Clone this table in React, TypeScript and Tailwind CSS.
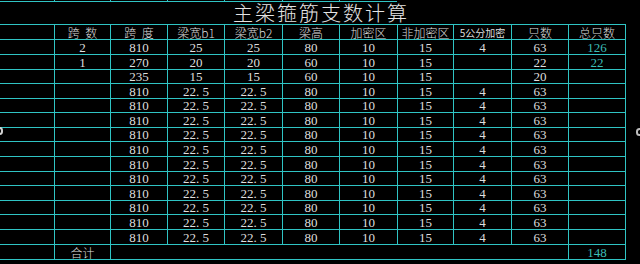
const cjk = { fontFamily: '"Noto Sans CJK SC", "Noto Sans", sans-serif' };
const num = { fontFamily: '"Liberation Serif", "Noto Sans CJK SC", serif' };

type Cell = { text?: string; cyan?: boolean; small?: boolean; cjk?: boolean };

const header: Cell[] = [
  {},
  { text: "跨  数", cjk: true },
  { text: "跨  度", cjk: true },
  { text: "梁宽b1", cjk: true },
  { text: "梁宽b2", cjk: true },
  { text: "梁高", cjk: true },
  { text: "加密区", cjk: true },
  { text: "非加密区", cjk: true },
  { text: "5公分加密", cjk: true, small: true },
  { text: "只数", cjk: true },
  { text: "总只数", cjk: true },
];

const rows: string[][] = [
  ["", "2", "810", "25", "25", "80", "10", "15", "4", "63", "126"],
  ["", "1", "270", "20", "20", "60", "10", "15", "", "22", "22"],
  ["", "", "235", "15", "15", "60", "10", "15", "", "20", ""],
  ...Array.from({ length: 11 }, () => ["", "", "810", "22. 5", "22. 5", "80", "10", "15", "4", "63", ""]),
];

// cell heights between the cyan rules
const heights = ["h-[14px]", "h-[14px]", "h-[14px]", "h-[13px]", "h-[14px]", "h-[13px]", "h-[14px]", "h-[13px]", "h-[14px]", "h-[14px]", "h-[13px]", "h-[14px]", "h-[13px]", "h-[14px]", "h-[14px]"];

const cols = "grid-cols-[54px_55px_56px_56px_57px_56px_57px_55px_57px_56px_56px]";

function TableCell({ cell, h }: { cell: Cell; h: string }) {
  return (
    <div
      className={`${h} bg-black flex items-center justify-center whitespace-pre leading-[13px] ${
        cell.cyan ? "text-[#3cbdb6]" : "text-[#dedede]"
      } ${cell.small ? "text-[10px]" : cell.cjk ? "text-[12px] font-light" : "text-[13px]"}`}
      style={cell.cjk ? cjk : num}
    >
      {cell.text}
    </div>
  );
}

export default function App() {
  return (
    <div className="relative w-[640px] h-[264px] bg-black overflow-hidden">
      {/* bottom edge of the table above */}
      <div className="w-[397px] bg-[#2fc4c4] pb-px">
        <div className="grid grid-cols-[54px_55px_56px_56px_57px_56px_57px] gap-x-px">
          {Array.from({ length: 7 }, (_, i) => (
            <div key={i} className="h-px bg-black" />
          ))}
        </div>
      </div>

      <div className="h-[22px] flex items-center justify-center">
        <span className="text-[20px] leading-[22px] font-light text-[#e4e4e4] tracking-[2px] ml-[2px]" style={cjk}>
          主梁箍筋支数计算
        </span>
      </div>

      <div className="w-[626px] bg-[#2fc4c4] pt-px pr-px pb-px">
        <div className={`grid ${cols} gap-px`}>
          {header.map((c, i) => (
            <TableCell key={`h${i}`} cell={c} h={heights[0]} />
          ))}
          {rows.map((r, ri) =>
            r.map((t, ci) => (
              <TableCell key={`${ri}-${ci}`} cell={{ text: t, cyan: ci === 10 }} h={heights[ri + 1]} />
            ))
          )}
          <TableCell cell={{}} h="h-[14px]" />
          <TableCell cell={{ text: "合计", cjk: true }} h="h-[14px]" />
          <div className="col-span-8 h-[14px] bg-black" />
          <TableCell cell={{ text: "148", cyan: true }} h="h-[14px]" />
        </div>
      </div>

      {/* stray marks on the edges */}
      <div className="absolute left-[-4px] top-[127px] w-[7px] h-[8px] rounded-full border-2 border-[#cfcfcf]" />
      <div className="absolute left-[636px] top-[128px] w-[7px] h-[8px] rounded-full border-2 border-[#bdbdbd]" />
    </div>
  );
}
